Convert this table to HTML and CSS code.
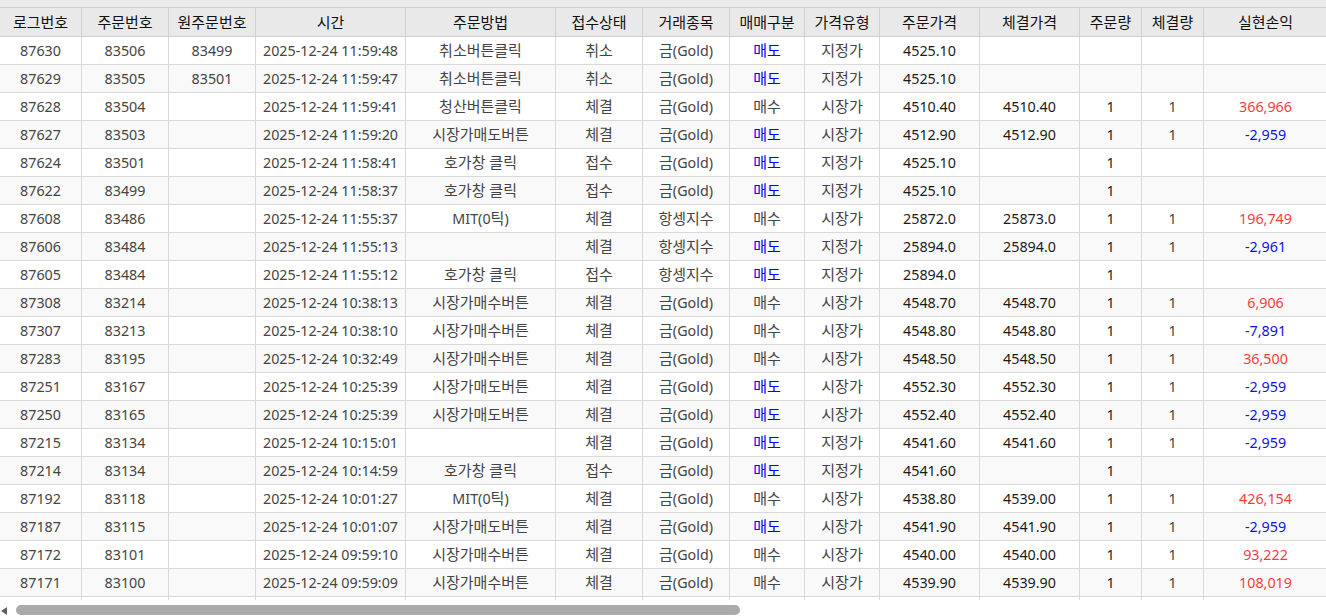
FILE: index.html
```html
<!DOCTYPE html>
<html lang="ko">
<head>
<meta charset="utf-8">
<title>주문로그</title>
<link rel="stylesheet" href="styles.css">
</head>
<body>
<div class="grid-wrap">
  <div class="grid-view">
    <table class="grid">
      <colgroup>
        <col class="c-log"><col class="c-ord"><col class="c-org"><col class="c-time"><col class="c-method"><col class="c-status"><col class="c-item"><col class="c-side"><col class="c-ptype"><col class="c-price"><col class="c-fill"><col class="c-qty"><col class="c-fqty"><col class="c-pnl"><col class="c-extra">
      </colgroup>
      <thead>
        <tr>
          <th>로그번호</th><th>주문번호</th><th>원주문번호</th><th>시간</th><th>주문방법</th><th>접수상태</th><th>거래종목</th><th>매매구분</th><th>가격유형</th><th>주문가격</th><th>체결가격</th><th>주문량</th><th>체결량</th><th>실현손익</th><th></th>
        </tr>
      </thead>
      <tbody>
        <tr><td>87630</td><td>83506</td><td>83499</td><td>2025-12-24 11:59:48</td><td>취소버튼클릭</td><td>취소</td><td>금<span class="lat">(Gold)</span></td><td class="sell">매도</td><td>지정가</td><td class="dk">4525.10</td><td class="dk"></td><td class="dk"></td><td></td><td></td><td></td></tr>
        <tr><td>87629</td><td>83505</td><td>83501</td><td>2025-12-24 11:59:47</td><td>취소버튼클릭</td><td>취소</td><td>금<span class="lat">(Gold)</span></td><td class="sell">매도</td><td>지정가</td><td class="dk">4525.10</td><td class="dk"></td><td class="dk"></td><td></td><td></td><td></td></tr>
        <tr><td>87628</td><td>83504</td><td></td><td>2025-12-24 11:59:41</td><td>청산버튼클릭</td><td>체결</td><td>금<span class="lat">(Gold)</span></td><td>매수</td><td>시장가</td><td class="dk">4510.40</td><td class="dk">4510.40</td><td class="dk">1</td><td>1</td><td class="up">366,966</td><td></td></tr>
        <tr><td>87627</td><td>83503</td><td></td><td>2025-12-24 11:59:20</td><td>시장가매도버튼</td><td>체결</td><td>금<span class="lat">(Gold)</span></td><td class="sell">매도</td><td>시장가</td><td class="dk">4512.90</td><td class="dk">4512.90</td><td class="dk">1</td><td>1</td><td class="down">-2,959</td><td></td></tr>
        <tr><td>87624</td><td>83501</td><td></td><td>2025-12-24 11:58:41</td><td>호가창 클릭</td><td>접수</td><td>금<span class="lat">(Gold)</span></td><td class="sell">매도</td><td>지정가</td><td class="dk">4525.10</td><td class="dk"></td><td class="dk">1</td><td></td><td></td><td></td></tr>
        <tr><td>87622</td><td>83499</td><td></td><td>2025-12-24 11:58:37</td><td>호가창 클릭</td><td>접수</td><td>금<span class="lat">(Gold)</span></td><td class="sell">매도</td><td>지정가</td><td class="dk">4525.10</td><td class="dk"></td><td class="dk">1</td><td></td><td></td><td></td></tr>
        <tr><td>87608</td><td>83486</td><td></td><td>2025-12-24 11:55:37</td><td><span class="lat">MIT(0</span>틱<span class="lat">)</span></td><td>체결</td><td>항셍지수</td><td>매수</td><td>시장가</td><td class="dk">25872.0</td><td class="dk">25873.0</td><td class="dk">1</td><td>1</td><td class="up">196,749</td><td></td></tr>
        <tr><td>87606</td><td>83484</td><td></td><td>2025-12-24 11:55:13</td><td></td><td>체결</td><td>항셍지수</td><td class="sell">매도</td><td>지정가</td><td class="dk">25894.0</td><td class="dk">25894.0</td><td class="dk">1</td><td>1</td><td class="down">-2,961</td><td></td></tr>
        <tr><td>87605</td><td>83484</td><td></td><td>2025-12-24 11:55:12</td><td>호가창 클릭</td><td>접수</td><td>항셍지수</td><td class="sell">매도</td><td>지정가</td><td class="dk">25894.0</td><td class="dk"></td><td class="dk">1</td><td></td><td></td><td></td></tr>
        <tr><td>87308</td><td>83214</td><td></td><td>2025-12-24 10:38:13</td><td>시장가매수버튼</td><td>체결</td><td>금<span class="lat">(Gold)</span></td><td>매수</td><td>시장가</td><td class="dk">4548.70</td><td class="dk">4548.70</td><td class="dk">1</td><td>1</td><td class="up">6,906</td><td></td></tr>
        <tr><td>87307</td><td>83213</td><td></td><td>2025-12-24 10:38:10</td><td>시장가매수버튼</td><td>체결</td><td>금<span class="lat">(Gold)</span></td><td>매수</td><td>시장가</td><td class="dk">4548.80</td><td class="dk">4548.80</td><td class="dk">1</td><td>1</td><td class="down">-7,891</td><td></td></tr>
        <tr><td>87283</td><td>83195</td><td></td><td>2025-12-24 10:32:49</td><td>시장가매수버튼</td><td>체결</td><td>금<span class="lat">(Gold)</span></td><td>매수</td><td>시장가</td><td class="dk">4548.50</td><td class="dk">4548.50</td><td class="dk">1</td><td>1</td><td class="up">36,500</td><td></td></tr>
        <tr><td>87251</td><td>83167</td><td></td><td>2025-12-24 10:25:39</td><td>시장가매도버튼</td><td>체결</td><td>금<span class="lat">(Gold)</span></td><td class="sell">매도</td><td>시장가</td><td class="dk">4552.30</td><td class="dk">4552.30</td><td class="dk">1</td><td>1</td><td class="down">-2,959</td><td></td></tr>
        <tr><td>87250</td><td>83165</td><td></td><td>2025-12-24 10:25:39</td><td>시장가매도버튼</td><td>체결</td><td>금<span class="lat">(Gold)</span></td><td class="sell">매도</td><td>시장가</td><td class="dk">4552.40</td><td class="dk">4552.40</td><td class="dk">1</td><td>1</td><td class="down">-2,959</td><td></td></tr>
        <tr><td>87215</td><td>83134</td><td></td><td>2025-12-24 10:15:01</td><td></td><td>체결</td><td>금<span class="lat">(Gold)</span></td><td class="sell">매도</td><td>지정가</td><td class="dk">4541.60</td><td class="dk">4541.60</td><td class="dk">1</td><td>1</td><td class="down">-2,959</td><td></td></tr>
        <tr><td>87214</td><td>83134</td><td></td><td>2025-12-24 10:14:59</td><td>호가창 클릭</td><td>접수</td><td>금<span class="lat">(Gold)</span></td><td class="sell">매도</td><td>지정가</td><td class="dk">4541.60</td><td class="dk"></td><td class="dk">1</td><td></td><td></td><td></td></tr>
        <tr><td>87192</td><td>83118</td><td></td><td>2025-12-24 10:01:27</td><td><span class="lat">MIT(0</span>틱<span class="lat">)</span></td><td>체결</td><td>금<span class="lat">(Gold)</span></td><td>매수</td><td>시장가</td><td class="dk">4538.80</td><td class="dk">4539.00</td><td class="dk">1</td><td>1</td><td class="up">426,154</td><td></td></tr>
        <tr><td>87187</td><td>83115</td><td></td><td>2025-12-24 10:01:07</td><td>시장가매도버튼</td><td>체결</td><td>금<span class="lat">(Gold)</span></td><td class="sell">매도</td><td>시장가</td><td class="dk">4541.90</td><td class="dk">4541.90</td><td class="dk">1</td><td>1</td><td class="down">-2,959</td><td></td></tr>
        <tr><td>87172</td><td>83101</td><td></td><td>2025-12-24 09:59:10</td><td>시장가매수버튼</td><td>체결</td><td>금<span class="lat">(Gold)</span></td><td>매수</td><td>시장가</td><td class="dk">4540.00</td><td class="dk">4540.00</td><td class="dk">1</td><td>1</td><td class="up">93,222</td><td></td></tr>
        <tr><td>87171</td><td>83100</td><td></td><td>2025-12-24 09:59:09</td><td>시장가매수버튼</td><td>체결</td><td>금<span class="lat">(Gold)</span></td><td>매수</td><td>시장가</td><td class="dk">4539.90</td><td class="dk">4539.90</td><td class="dk">1</td><td>1</td><td class="up">108,019</td><td></td></tr>
        <tr><td></td><td></td><td></td><td></td><td></td><td></td><td></td><td></td><td></td><td></td><td></td><td></td><td></td><td></td><td></td></tr>
      </tbody>
    </table>
  </div>
  <div class="hscroll">
    <span class="arrow-left"></span>
    <div class="track"><div class="thumb"></div></div>
  </div>
</div>
</body>
</html>
```

FILE: styles.css
```css
html, body {
  margin: 0;
  padding: 0;
  background: #ffffff;
  overflow: hidden;
}
body {
  font-family: "Noto Sans", "Noto Sans CJK KR", sans-serif;
  font-size: 14.3px;
  color: #444;
}
.grid-wrap {
  width: 1326px;
  height: 616px;
  display: flex;
  flex-direction: column;
}
.grid-view {
  height: 600px;
  overflow: hidden;
  background: #ebebeb;
  padding-top: 7px;
  box-sizing: border-box;
}
.grid {
  table-layout: fixed;
  border-collapse: collapse;
  width: 1500px;
  margin-left: -1px;
}
.c-log { width: 82px; }
.c-ord { width: 87px; }
.c-org { width: 87px; }
.c-time { width: 150px; }
.c-method { width: 150px; }
.c-status { width: 87px; }
.c-item { width: 87px; }
.c-side { width: 75px; }
.c-ptype { width: 75px; }
.c-price { width: 100px; }
.c-fill { width: 100px; }
.c-qty { width: 62px; }
.c-fqty { width: 62px; }
.c-pnl { width: 124px; }
.c-extra { width: 172px; }

.grid th,
.grid td {
  border: 1px solid #d9d9d9;
  height: 27px;
  padding: 0;
  text-align: center;
  white-space: nowrap;
  overflow: hidden;
  line-height: 27px;
}
.grid th {
  background: #e9e9e9;
  font-weight: normal;
  font-size: 15px;
  color: #111;
  height: 28px;
  border-color: #d0d0d0;
}
.grid td:nth-child(n+5):nth-child(-n+9) {
  font-size: 15px;
}
.grid td .lat {
  font-size: 14.3px;
}
.grid tbody tr:nth-child(odd) td { background: #ffffff; }
.grid tbody tr:nth-child(even) td { background: #f9f9f9; }
.grid td.dk { color: #1a1a1a; }
.grid td.sell { color: #0000ff; }
.grid td.up { color: #ff3b3b; }
.grid td.down { color: #1010ee; }

.hscroll {
  height: 16px;
  display: flex;
  align-items: center;
  background: #ffffff;
}
.arrow-left {
  width: 0;
  height: 0;
  margin-left: 1px;
  margin-top: 6px;
  border-top: 4px solid transparent;
  border-bottom: 4px solid transparent;
  border-right: 6px solid #606060;
}
.track {
  flex: 1;
  height: 10px;
  margin-left: 9px;
  margin-top: 4px;
}
.thumb {
  width: 724px;
  height: 10px;
  border-radius: 5px;
  background: #ababab;
}
```
